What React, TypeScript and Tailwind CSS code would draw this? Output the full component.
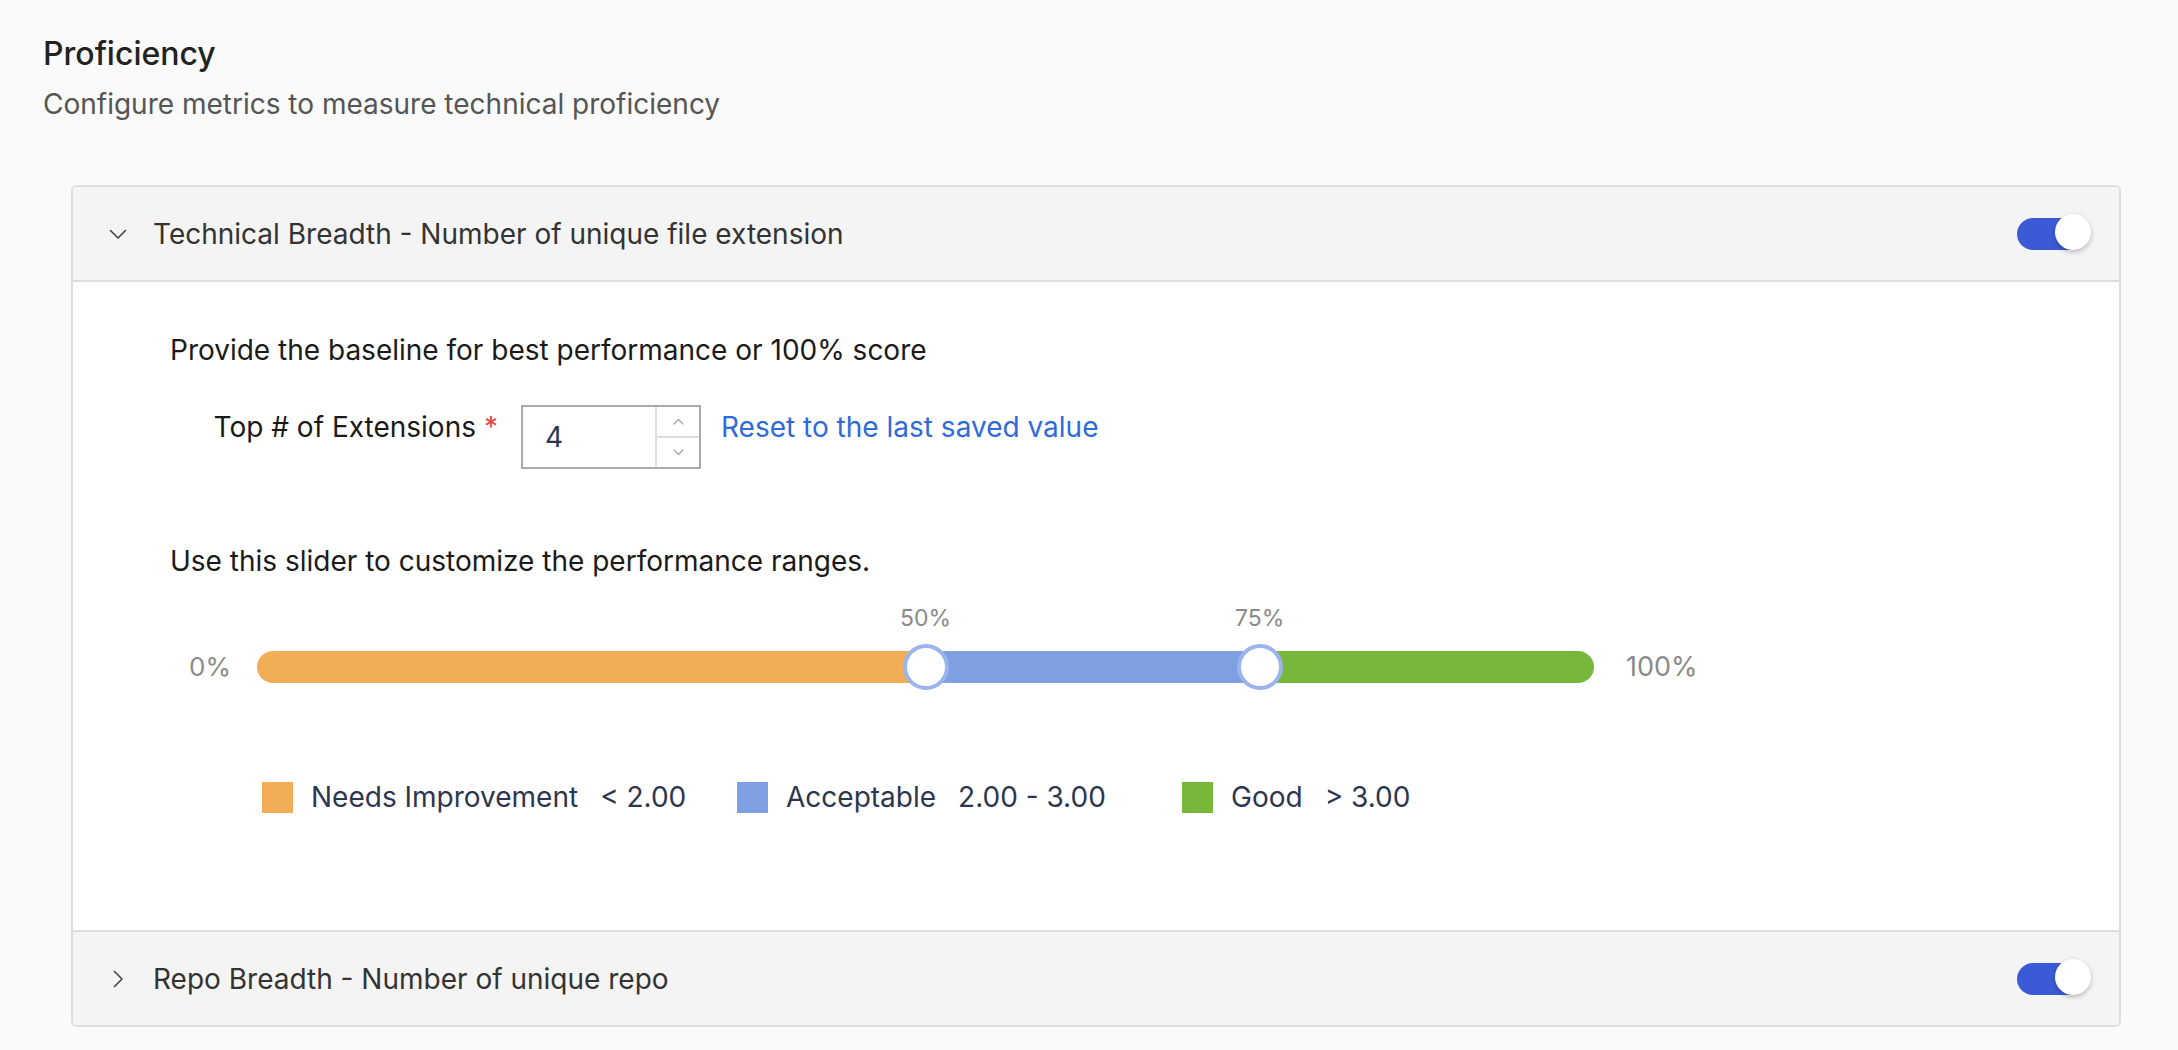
import React from "react";

function ChevronDown() {
  return (
    <svg width="18" height="10" viewBox="0 0 18 10" fill="none">
      <path d="M1.5 1.5l7.5 7.5 7.5-7.5" stroke="#444" strokeWidth="1.6" strokeLinecap="round" strokeLinejoin="round" />
    </svg>
  );
}

function ChevronRight() {
  return (
    <svg width="10" height="18" viewBox="0 0 10 18" fill="none">
      <path d="M1.5 1.5l7.5 7.5-7.5 7.5" stroke="#444" strokeWidth="1.6" strokeLinecap="round" strokeLinejoin="round" />
    </svg>
  );
}

function SmallChevron({ up }: { up?: boolean }) {
  return (
    <svg width="11" height="7" viewBox="0 0 11 7" fill="none">
      <path
        d={up ? "M1 6l4.5-4.5L10 6" : "M1 1l4.5 4.5L10 1"}
        stroke="#9aa0ab"
        strokeWidth="1.2"
        strokeLinecap="round"
        strokeLinejoin="round"
      />
    </svg>
  );
}

function Toggle() {
  return (
    <div className="relative w-[72px] h-[32px] rounded-full bg-[#3b5bd6]">
      <div className="absolute right-[-2px] top-[-4px] w-[36px] h-[36px] rounded-full bg-white shadow-[0_2px_5px_rgba(0,0,0,0.25)]" />
    </div>
  );
}

function Header({ title, open }: { title: string; open?: boolean }) {
  return (
    <div className="flex items-center h-[93px] bg-[#f4f4f4] pl-[36px] pr-[30px]">
      <div className="w-[18px] flex justify-center">{open ? <ChevronDown /> : <ChevronRight />}</div>
      <div className="ml-[26px] text-[28px] leading-[34px] text-[#333333]">{title}</div>
      <div className="ml-auto">
        <Toggle />
      </div>
    </div>
  );
}

function LegendItem({ color, label, value, width }: { color: string; label: string; value: string; width: string }) {
  return (
    <div className={`flex items-center ${width}`}>
      <div className={`w-[31px] h-[31px] ${color}`} />
      <span className="ml-[18px]">{label}</span>
      <span className="ml-[22px]">{value}</span>
    </div>
  );
}

export default function App() {
  return (
    <div className="min-h-screen bg-[#fafafa] font-['Inter',sans-serif] pb-[25px]">
      <div className="pl-[43px] pt-[36px]">
        <div className="text-[32px] leading-[36px] font-medium text-[#222222]">Proficiency</div>
        <div className="mt-[16px] text-[28px] leading-[32px] text-[#555555]">
          Configure metrics to measure technical proficiency
        </div>
      </div>

      <div className="ml-[71px] mt-[65px] w-[2050px] border-2 border-[#dddde1] rounded-[6px] overflow-hidden">
        <Header title="Technical Breadth - Number of unique file extension" open />

        <div className="bg-white border-t-2 border-b-2 border-[#dddde1] pl-[97px] pt-[52px] pb-[117px] text-[28px] leading-[32px]">
          <div className="text-[#1a1a1a]">Provide the baseline for best performance or 100% score</div>

          <div className="flex items-start mt-[39px]">
            <div className="w-[351px] flex justify-end pr-[23px] mt-[6px] text-[#1a1a1a]">
              <span>Top # of Extensions</span>
              <span className="ml-[8px] text-[#e5484d]">*</span>
            </div>
            <div className="flex w-[180px] h-[64px] border-2 border-[#aaaaaa] bg-white">
              <div className="flex-1 flex items-center pl-[22px] text-[28px] text-[#2d3650]">4</div>
              <div className="w-[44px] flex flex-col border-l-2 border-[#dddde1]">
                <div className="flex-1 flex items-center justify-center border-b-2 border-[#dddde1]">
                  <SmallChevron up />
                </div>
                <div className="flex-1 flex items-center justify-center">
                  <SmallChevron />
                </div>
              </div>
            </div>
            <div className="ml-[20px] mt-[6px] text-[#2f6bd8]">Reset to the last saved value</div>
          </div>

          <div className="mt-[76px] text-[#1a1a1a]">Use this slider to customize the performance ranges.</div>

          <div className="mt-[74px] flex items-center">
            <div className="ml-[19px] w-[39px] min-w-0 shrink-0 whitespace-nowrap text-[26px] text-[#8a8a8a]">0%</div>
            <div className="ml-[29px] shrink-0 relative w-[1337px] h-[32px]">
              <div className="flex w-full h-full rounded-full overflow-hidden">
                <div className="w-1/2 bg-[#f2ad57]" />
                <div className="w-1/4 bg-[#7f9fe3]" />
                <div className="w-1/4 bg-[#77b83a]" />
              </div>
              <div className="absolute left-1/2 top-[-47px] h-[28px] -translate-x-1/2 text-[23px] leading-[28px] text-[#8a8a8a]">
                50%
              </div>
              <div className="absolute left-3/4 top-[-47px] h-[28px] -translate-x-1/2 text-[23px] leading-[28px] text-[#8a8a8a]">
                75%
              </div>
              <div className="absolute left-1/2 top-1/2 w-[46px] h-[46px] -translate-x-1/2 -translate-y-1/2 rounded-full bg-white border-[4px] border-[#9cb4ee]" />
              <div className="absolute left-3/4 top-1/2 w-[46px] h-[46px] -translate-x-1/2 -translate-y-1/2 rounded-full bg-white border-[4px] border-[#9cb4ee]" />
            </div>
            <div className="ml-[32px] text-[27px] text-[#8a8a8a]">100%</div>
          </div>

          <div className="mt-[98px] ml-[92px] flex items-center text-[#2d3650]">
            <LegendItem color="bg-[#f2ad57]" label="Needs Improvement" value="< 2.00" width="w-[475px]" />
            <LegendItem color="bg-[#7f9fe3]" label="Acceptable" value="2.00 - 3.00" width="w-[445px]" />
            <LegendItem color="bg-[#77b83a]" label="Good" value="> 3.00" width="w-[300px]" />
          </div>
        </div>

        <Header title="Repo Breadth - Number of unique repo" />
      </div>
    </div>
  );
}
